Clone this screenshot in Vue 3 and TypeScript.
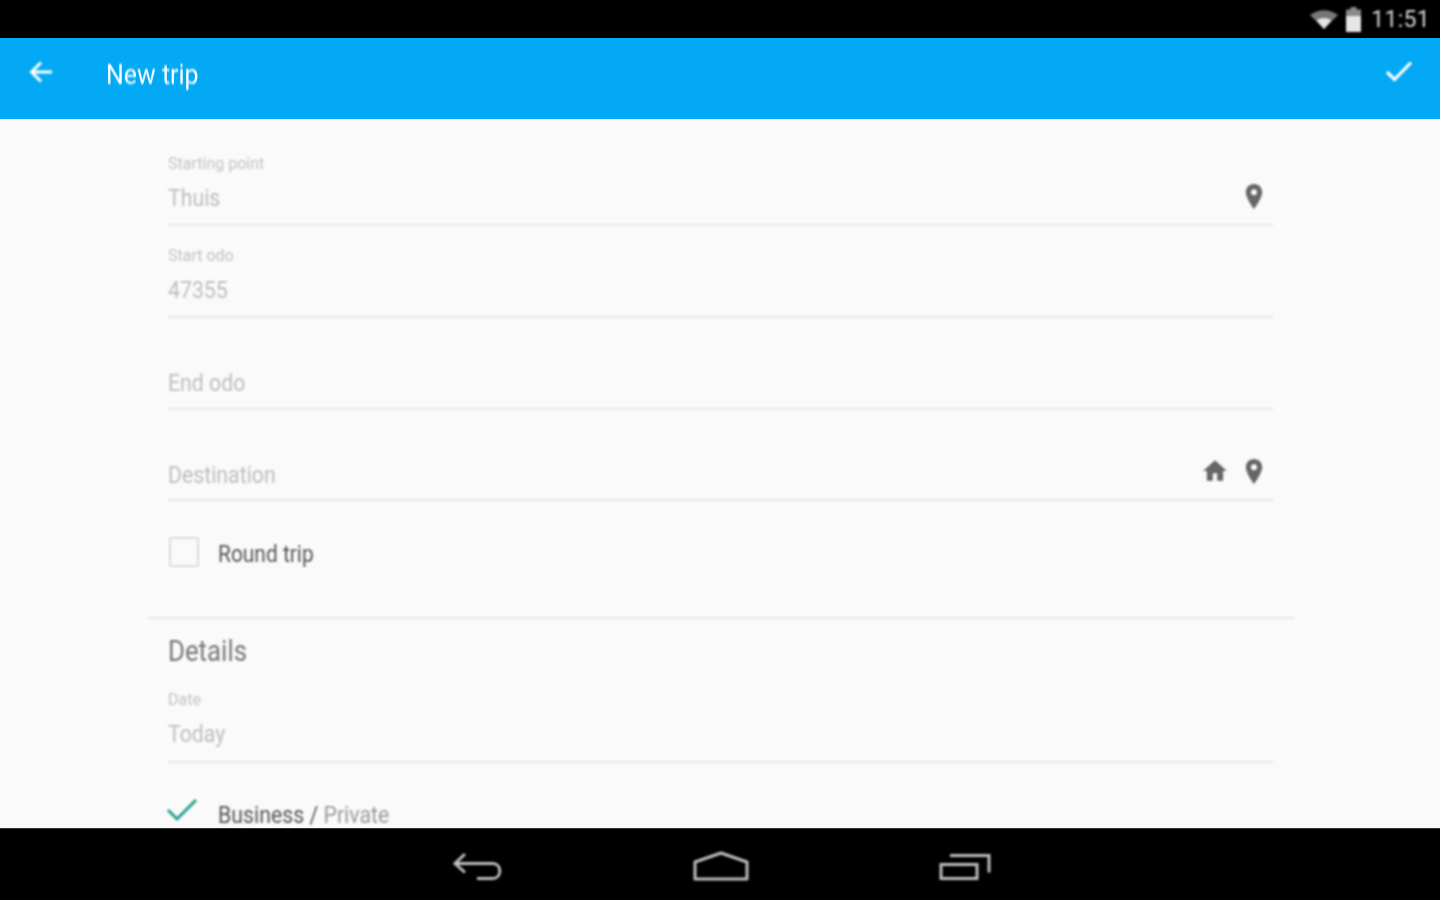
<template>
  <div class="screen">
    <div class="status-bar">
      <svg class="wifi" viewBox="0 0 28 20" width="28" height="20">
        <path d="M0 6C8 -0.500 20 -0.500 28 6L14 20z" fill="#777" />
        <path d="M6.500 11.500C11 8.200 17 8.200 21.500 11.500L14 20z" fill="#e4e4e4" />
      </svg>
      <svg class="battery" viewBox="0 0 17 25" width="17" height="25">
        <path d="M5.500 0h6v2.500h4.500V25H1V2.500h4.500z" fill="#8a8a8a" />
        <rect x="1" y="9" width="15" height="16" fill="#e6e6e6" />
      </svg>
      <span class="clock">11:51</span>
    </div>

    <header class="app-bar">
      <svg class="back" viewBox="0 0 26 24" width="26" height="24" fill="none" stroke="#fff" stroke-width="3">
        <path d="M24 12H4" />
        <path d="M13 2.500L3.500 12l9.500 9.500" />
      </svg>
      <h1 class="title">New trip</h1>
      <svg class="done" viewBox="0 0 28 22" width="28" height="22" fill="none" stroke="#fff" stroke-width="3.200">
        <path d="M2 12l7.500 7.500L26 2.500" />
      </svg>
    </header>

    <main class="content">
      <section class="form">
        <div v-for="field in tripFields" :key="field.id" class="field">
          <span class="label">{{ field.label }}</span>
          <div class="input-row">
            <span class="value">{{ field.value }}</span>
            <div class="field-icons">
              <svg v-if="field.home" viewBox="0 0 24 24" width="26" height="26" fill="#666">
                <path d="M10 21v-7h4v7h5.500v-9H23L12 2 1 12h3.500v9z" />
              </svg>
              <svg v-if="field.pin" viewBox="0 0 24 24" width="26" height="26" fill="#666">
                <path fill-rule="evenodd" d="M12 1C7.700 1 4.500 4.300 4.500 8.500 4.500 14 12 24 12 24s7.500-10 7.500-15.500C19.500 4.300 16.300 1 12 1zm0 10.300a2.800 2.800 0 1 1 0-5.600 2.800 2.800 0 0 1 0 5.600z" />
              </svg>
            </div>
          </div>
        </div>

        <label class="check-row round">
          <span class="checkbox"></span>
          <span class="check-text">Round trip</span>
        </label>
      </section>

      <hr class="section-rule" />

      <section class="form">
        <h2 class="section-title">Details</h2>
        <div class="field date-field">
          <span class="label">Date</span>
          <div class="input-row">
            <span class="value">Today</span>
          </div>
        </div>
        <div class="check-row business">
          <svg class="tick" viewBox="0 0 32 24" width="32" height="24" fill="none" stroke="#26a08f" stroke-width="3">
            <path d="M2 12l9 9L30 2" />
          </svg>
          <span class="check-text">Business / <span class="muted">Private</span></span>
        </div>
      </section>
    </main>

    <nav class="nav-bar">
      <svg viewBox="0 0 52 32" width="52" height="32" fill="none" stroke="#bdbdbd" stroke-width="3">
        <path d="M13 3L3 12.500l10 9" />
        <path d="M3 12.500h38c9 0 9 15 0 15H25" />
      </svg>
      <svg viewBox="0 0 58 32" width="58" height="32" fill="none" stroke="#bdbdbd" stroke-width="3">
        <path d="M3 28V11L29 2l26 9v17z" stroke-linejoin="round" />
      </svg>
      <svg viewBox="0 0 54 32" width="54" height="32" fill="none" stroke="#bdbdbd" stroke-width="3">
        <rect x="3" y="13.500" width="36" height="14" />
        <path d="M12 4.500h39v17" />
      </svg>
    </nav>
  </div>
</template>

<script setup lang="ts">
interface TripField {
  id: string;
  label: string;
  value: string;
  pin?: boolean;
  home?: boolean;
}

const tripFields: TripField[] = [
  { id: "start", label: "Starting point", value: "Thuis", pin: true },
  { id: "startOdo", label: "Start odo", value: "47355" },
  { id: "endOdo", label: "", value: "End odo" },
  { id: "dest", label: "", value: "Destination", pin: true, home: true },
];
</script>

<style scoped>
.screen {
  width: 1440px;
  height: 900px;
  display: flex;
  flex-direction: column;
  overflow: hidden;
  background: #fafafa;
  font-family: Roboto, "Liberation Sans", sans-serif;
}

/* the reference is an upscaled capture, so its content is a bit soft */
.content,
.status-bar > *,
.app-bar > *,
.nav-bar > * {
  filter: blur(0.8px);
}

.status-bar {
  height: 38px;
  flex-shrink: 0;
  display: flex;
  align-items: center;
  justify-content: flex-end;
  gap: 7px;
  padding-right: 10px;
  background: #000;
}

.clock {
  margin-left: 2px;
  color: #d4d4d4;
  font-size: 23px;
  letter-spacing: 0.3px;
}

.app-bar {
  height: 81px;
  flex-shrink: 0;
  display: flex;
  align-items: flex-start;
  background: #03a9f4;
}

.back {
  margin: 22px 0 0 28px;
}

.title {
  flex: 1;
  margin: 19px 0 0 52px;
  color: #fff;
  font-size: 28px;
  line-height: 36px;
  font-weight: 400;
  transform: scaleX(0.89);
  transform-origin: left;
}

.done {
  margin: 22px 27px 0 0;
}

.content {
  flex: 1;
  min-height: 0;
  overflow: hidden;
}

.form {
  width: 1105px;
  margin-left: 168px;
}

.field {
  height: 92px;
  padding-bottom: 8px;
  box-sizing: border-box;
  border-bottom: 2px solid #e8e8e8;
  display: flex;
  flex-direction: column;
  justify-content: flex-end;
}

.field:first-child {
  height: 107px;
}

.field:nth-child(3) .value {
  margin-top: 4px;
}

.field:nth-child(4) {
  height: 91px;
}

.field:nth-child(4) .value {
  margin-top: 5px;
}

.label {
  height: 20px;
  color: #c2c2c2;
  font-size: 16px;
  line-height: 20px;
}

.input-row {
  display: flex;
  align-items: center;
  justify-content: space-between;
  height: 36px;
  margin-top: 6px;
}

.value {
  margin-top: 2px;
  color: #bdbdbd;
  font-size: 23px;
  line-height: 36px;
  transform: scaleX(0.925);
  transform-origin: left;
}

.field-icons {
  display: flex;
  gap: 13px;
  margin: -4px 6px 0 0;
}

.check-row {
  display: flex;
  align-items: center;
}

.round {
  height: 116px;
  padding-bottom: 15px;
  box-sizing: border-box;
}

.checkbox {
  width: 26px;
  height: 26px;
  border: 2px solid #dcdcdc;
  border-radius: 2px;
  margin: 0 19px 0 1px;
}

.check-text {
  margin-top: 6px;
  color: #555;
  font-size: 23px;
  transform: scaleX(0.91);
  transform-origin: left;
}

.business .check-text {
  margin-top: 0;
  transform: scaleX(0.925);
}

.muted {
  color: #9a9a9a;
}

.section-rule {
  width: 1147px;
  height: 2px;
  margin: 0 0 0 148px;
  border: 0;
  background: #e8e8e8;
}

.section-title {
  margin: 0;
  padding-top: 14px;
  height: 44px;
  color: #777;
  font-size: 29px;
  line-height: 36px;
  font-weight: 400;
  transform: scaleX(0.89);
  transform-origin: left;
}

.date-field {
  height: 86px;
  padding-bottom: 9px;
}

.business {
  height: 104px;
}

.tick {
  margin: -10px 20px 0 -2px;
}

.nav-bar {
  height: 72px;
  flex-shrink: 0;
  display: flex;
  align-items: center;
  justify-content: center;
  gap: 188px;
  padding: 4px 0 0 3px;
  background: #000;
  border-top: 1px solid #333;
  box-sizing: border-box;
}
</style>

<style>
html,
body {
  margin: 0;
  background: #fafafa;
}
</style>
